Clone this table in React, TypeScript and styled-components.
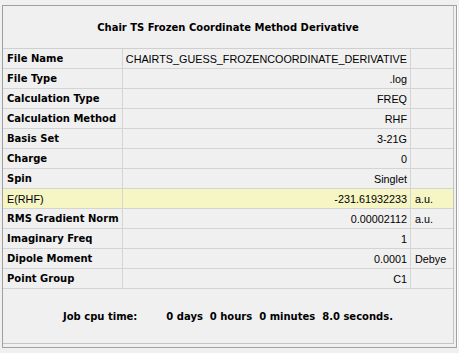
import styled, { createGlobalStyle } from "styled-components";

const GlobalStyle = createGlobalStyle`
  html, body {
    margin: 0;
    padding: 0;
    background: #f0f0f0;
  }
  body {
    font-family: "Liberation Sans", Arial, sans-serif;
    color: #000;
  }
`;

type Row = { label: string; value: string; unit?: string; highlight?: boolean };

const rows: Row[] = [
  { label: "File Name", value: "CHAIRTS_GUESS_FROZENCOORDINATE_DERIVATIVE" },
  { label: "File Type", value: ".log" },
  { label: "Calculation Type", value: "FREQ" },
  { label: "Calculation Method", value: "RHF" },
  { label: "Basis Set", value: "3-21G" },
  { label: "Charge", value: "0" },
  { label: "Spin", value: "Singlet" },
  { label: "E(RHF)", value: "-231.61932233", unit: "a.u.", highlight: true },
  { label: "RMS Gradient Norm", value: "0.00002112", unit: "a.u." },
  { label: "Imaginary Freq", value: "1" },
  { label: "Dipole Moment", value: "0.0001", unit: "Debye" },
  { label: "Point Group", value: "C1" },
];

const Frame = styled.div`
  margin: 5px 0 0 2px;
  width: 453px;
  height: 341px;
  border: 1px solid #a0a0a0;
  box-shadow: 1px 1px 0 #ffffff;
  background: #f0f0f0;
`;

const Grid = styled.div`
  width: 450px;
  border-right: 1px solid #c4c4c4;
  border-bottom: 1px solid #c4c4c4;
  display: flex;
  flex-direction: column;
`;

const Title = styled.div`
  height: 42px;
  border-bottom: 1px solid #cfcfcf;
  display: flex;
  align-items: center;
  justify-content: center;
  font-family: "DejaVu Sans", Verdana, sans-serif;
  font-weight: bold;
  font-size: 10px;
`;

const DataRow = styled.div<{ $highlight?: boolean }>`
  display: grid;
  grid-template-columns: 120px 288px 1fr;
  height: 19px;
  border-bottom: 1px solid #d4d4d4;
  background: ${(p) => (p.$highlight ? "#f6f5c4" : "#f0f0f0")};
`;

const Cell = styled.div<{ $align?: "left" | "right" }>`
  display: flex;
  align-items: center;
  justify-content: ${(p) => (p.$align === "right" ? "flex-end" : "flex-start")};
  padding: 0 3px 0 4px;
  border-right: 1px solid #d4d4d4;
  font-size: 10.8px;
  white-space: nowrap;
  overflow: hidden;
  &:last-child {
    border-right: none;
  }
`;

const Label = styled(Cell)<{ $plain?: boolean }>`
  font-family: ${(p) =>
    p.$plain ? `"Liberation Sans", Arial, sans-serif` : `"DejaVu Sans", Verdana, sans-serif`};
  font-weight: ${(p) => (p.$plain ? "normal" : "bold")};
  font-size: ${(p) => (p.$plain ? "10.8px" : "10px")};
`;

const Footer = styled.div`
  height: 54px;
  display: flex;
  align-items: center;
  justify-content: center;
  gap: 29px;
  font-family: "DejaVu Sans", Verdana, sans-serif;
  font-weight: bold;
  font-size: 10px;
  white-space: pre;
`;

export default function App() {
  return (
    <>
      <GlobalStyle />
      <Frame>
        <Grid>
          <Title>Chair TS Frozen Coordinate Method Derivative</Title>
          {rows.map((r) => (
            <DataRow key={r.label} $highlight={r.highlight}>
              <Label $plain={r.highlight}>{r.label}</Label>
              <Cell $align="right">{r.value}</Cell>
              <Cell>{r.unit ?? ""}</Cell>
            </DataRow>
          ))}
          <Footer>
            <span>Job cpu time:</span>
            <span>0 days  0 hours  0 minutes  8.0 seconds.</span>
          </Footer>
        </Grid>
      </Frame>
    </>
  );
}
